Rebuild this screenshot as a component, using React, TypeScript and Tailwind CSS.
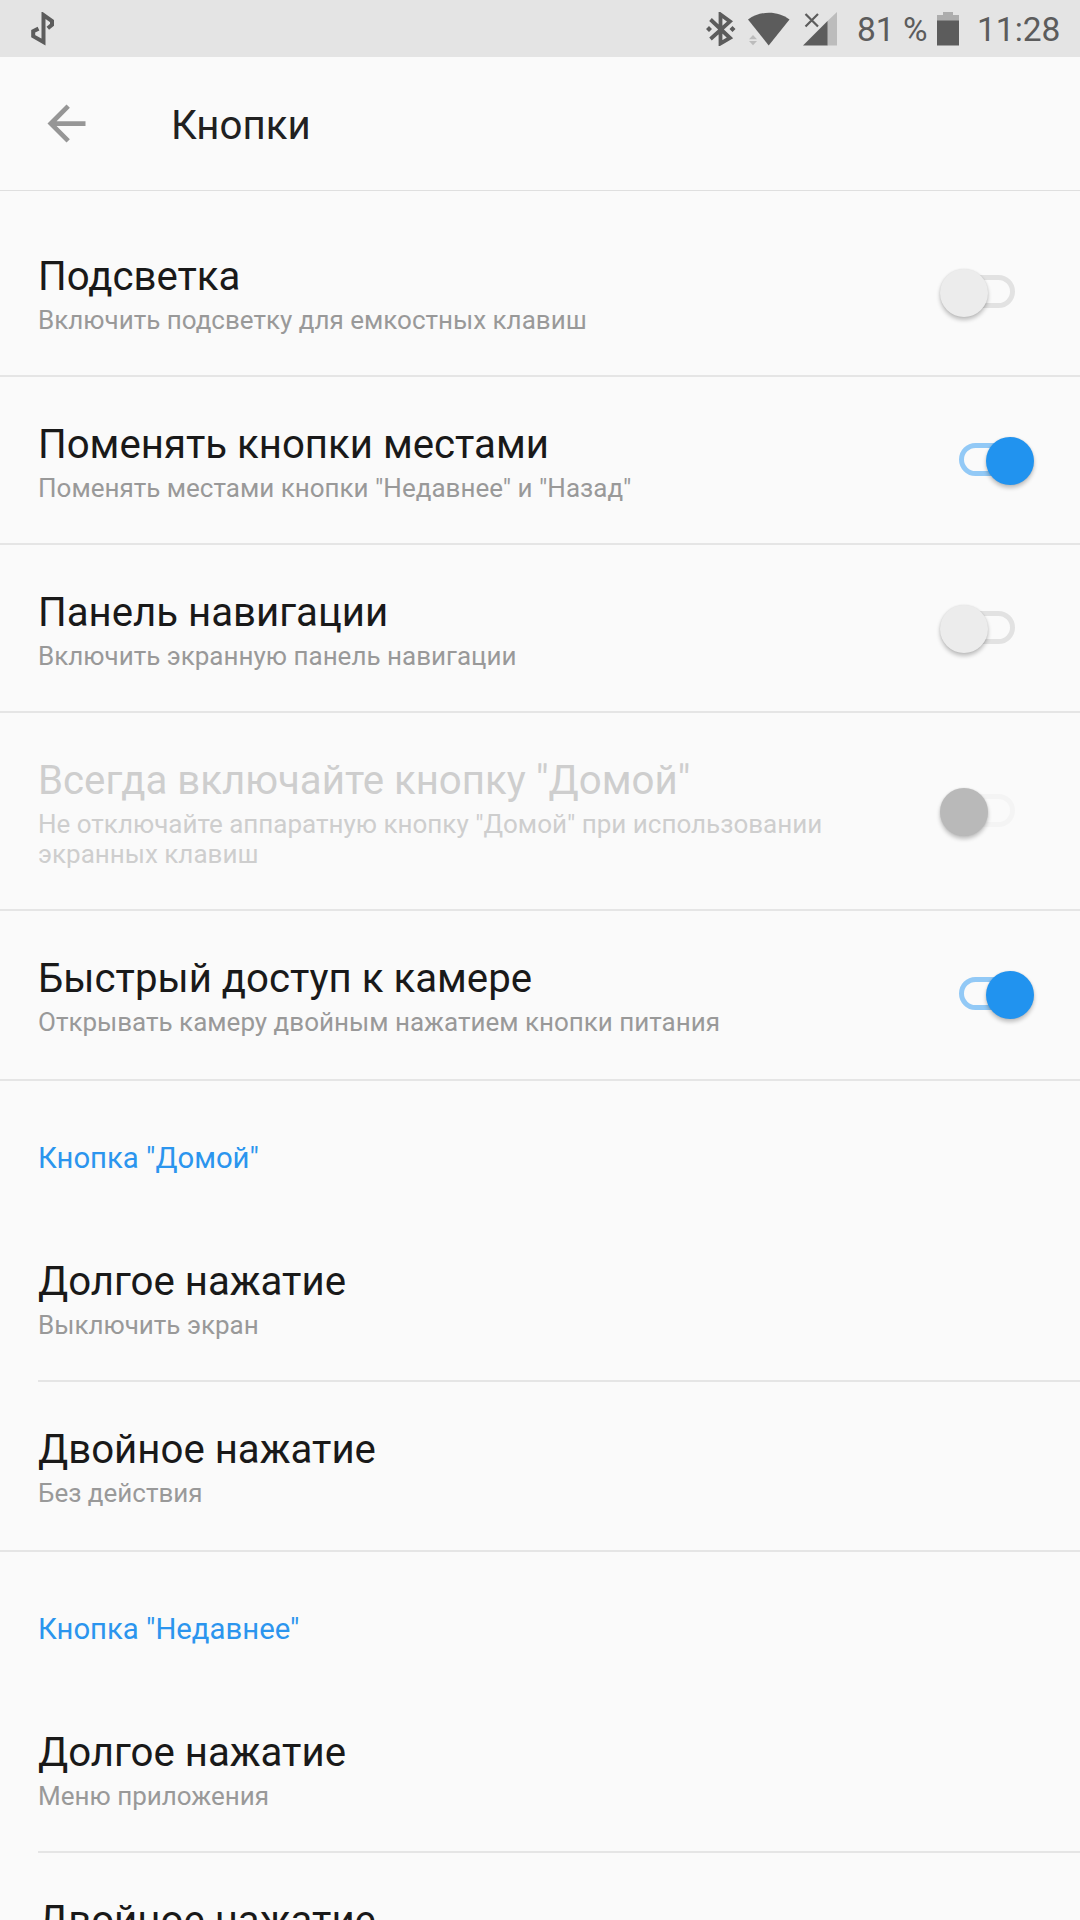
import { clsx } from "clsx";

type Setting = {
  title: string;
  summary: string;
  checked?: boolean;
  disabled?: boolean;
};

type Section = {
  name: string;
  items: Setting[];
};

const toggles: Setting[] = [
  { title: "Подсветка", summary: "Включить подсветку для емкостных клавиш", checked: false },
  { title: "Поменять кнопки местами", summary: 'Поменять местами кнопки "Недавнее" и "Назад"', checked: true },
  { title: "Панель навигации", summary: "Включить экранную панель навигации", checked: false },
  {
    title: 'Всегда включайте кнопку "Домой"',
    summary: 'Не отключайте аппаратную кнопку "Домой" при использовании экранных клавиш',
    checked: false,
    disabled: true,
  },
  { title: "Быстрый доступ к камере", summary: "Открывать камеру двойным нажатием кнопки питания", checked: true },
];

const sections: Section[] = [
  {
    name: 'Кнопка "Домой"',
    items: [
      { title: "Долгое нажатие", summary: "Выключить экран" },
      { title: "Двойное нажатие", summary: "Без действия" },
    ],
  },
  {
    name: 'Кнопка "Недавнее"',
    items: [
      { title: "Долгое нажатие", summary: "Меню приложения" },
      { title: "Двойное нажатие", summary: "" },
    ],
  },
];

function StatusBar() {
  return (
    <div className="flex h-[57px] shrink-0 items-center bg-[#e4e4e4] pl-[30px] text-[33.5px] leading-[57px] text-[#5c5c5c]">
      <svg className="h-[34px] w-6" viewBox="0 0 24 34" fill="none" stroke="#5c5c5c" strokeWidth="4">
        <path d="M17.8 16.2 22 12.800V9L13.500 3V30L3.200 24.200V19.200L8.500 16.600" />
      </svg>

      <div className="ml-auto flex items-center">
        <svg className="h-[34px] w-[30px]" viewBox="0 0 30 34">
          <path
            d="M4.500 7.500 24 26 14.500 31.500V2.500L24 9.500 4.500 27"
            fill="none"
            stroke="#5c5c5c"
            strokeWidth="3.800"
          />
          <path d="M3 14 6 17 3 20 0 17ZM26.500 14 29.500 17 26.500 20 23.500 17Z" fill="#5c5c5c" />
        </svg>
        <svg className="ml-3 h-[34px] w-[42px]" viewBox="0 0 42 34">
          <path d="M0 7.500C12-1.500 30-1.500 41.500 7.500L20.700 33.500Z" fill="#5c5c5c" />
          <path d="M5 23 9 27.200H1ZM5 33.200 9 29H1Z" fill="#bcbcbc" />
        </svg>
        <svg className="ml-[13px] h-[34px] w-[34px]" viewBox="0 0 34 34">
          <path d="M34 0V33.500H24V9.500Z" fill="#bcbcbc" />
          <path d="M24.500 9V33.500H0Z" fill="#5c5c5c" />
          <path d="M2.500 2 15 14.500M15 2 2.500 14.500" stroke="#5c5c5c" strokeWidth="2.200" />
        </svg>
        <span className="ml-5 w-[80px] pt-0.5 whitespace-nowrap">81 %</span>
        <svg className="h-[34px] w-[22px]" viewBox="0 0 22 34">
          <path d="M6 0H16V3H22V9H0V3H6Z" fill="#adadad" />
          <path d="M0 8.500H22V33.500H0Z" fill="#5c5c5c" />
        </svg>
        <span className="ml-[18px] w-[103px] pt-0.5 whitespace-nowrap">11:28</span>
      </div>
    </div>
  );
}

function Header() {
  return (
    <header className="flex h-[134px] shrink-0 items-center border-b border-[#dfdfdf] pl-[38px]">
      <svg className="size-[57px]" viewBox="0 0 24 24" fill="#969696">
        <path d="M20 11H7.830l5.590-5.590L12 4l-8 8 8 8 1.410-1.410L7.830 13H20v-2z" />
      </svg>
      <h1 className="ml-[76px] pt-1 text-[40.2px] leading-[48px] text-[#212121]">Кнопки</h1>
    </header>
  );
}

function Switch({ checked, disabled }: { checked?: boolean; disabled?: boolean }) {
  return (
    <div
      className={clsx(
        "relative mr-[65px] mb-0.5 h-[33px] w-14 rounded-full border-5",
        checked ? "border-[#92c9f6]" : disabled ? "border-[#f4f4f4]" : "border-[#e2e2e2]",
      )}
    >
      <div
        className={clsx(
          "absolute -top-[11px] size-12 rounded-full shadow-[0_3px_4px_rgba(0,0,0,0.24),0_0_2px_rgba(0,0,0,0.1)]",
          checked ? "left-[22px] bg-[#2193ef]" : "-left-6",
          !checked && (disabled ? "bg-[#b9b9b9]" : "bg-[#ececec]"),
        )}
      />
    </div>
  );
}

function SettingRow({ item }: { item: Setting }) {
  return (
    <div className="flex items-center">
      <div className={clsx("w-[860px] pt-11 pb-10 pl-[38px]", item.disabled ? "text-[#cecece]" : "text-[#191919]")}>
        <div className="text-[40.2px] leading-[48px] whitespace-nowrap">{item.title}</div>
        <div className={clsx("mt-1 text-[26px] leading-[30px]", !item.disabled && "text-[#999999]")}>{item.summary}</div>
      </div>
      {item.checked !== undefined && (
        <div className="ml-auto">
          <Switch checked={item.checked} disabled={item.disabled} />
        </div>
      )}
    </div>
  );
}

export default function App() {
  return (
    <div className="flex h-[1920px] w-[1080px] flex-col overflow-hidden bg-[#fafafa] font-[Roboto,sans-serif]">
      <StatusBar />
      <Header />

      <main className="pt-[18px]">
        <div className="divide-y-2 divide-[#e5e5e5] border-b-2 border-[#e5e5e5] pb-0.5">
          {toggles.map((t) => (
            <SettingRow key={t.title} item={t} />
          ))}
        </div>

        {sections.map((s) => (
          <section key={s.name} className="border-b-2 border-[#e5e5e5] pb-0.5">
            <h2 className="h-[133px] pt-[60px] pl-[38px] text-[29.3px] leading-[34px] text-[#2b95ee]">{s.name}</h2>
            {s.items.map((item, i) => (
              <div key={item.title}>
                {i > 0 && <div className="ml-[38px] h-0.5 bg-[#e5e5e5]" />}
                <SettingRow item={item} />
              </div>
            ))}
          </section>
        ))}
      </main>
    </div>
  );
}
